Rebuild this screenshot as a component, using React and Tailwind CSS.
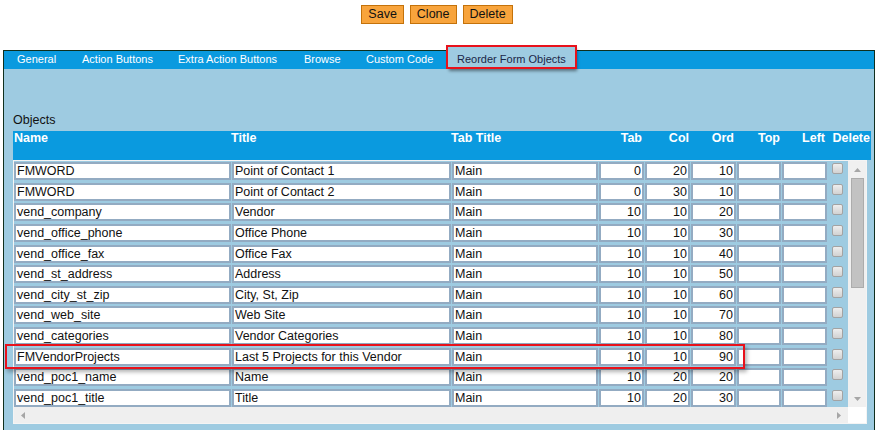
import React from "react";

const rows = [
  ["FMWORD", "Point of Contact 1", "Main", "0", "20", "10"],
  ["FMWORD", "Point of Contact 2", "Main", "0", "30", "10"],
  ["vend_company", "Vendor", "Main", "10", "10", "20"],
  ["vend_office_phone", "Office Phone", "Main", "10", "10", "30"],
  ["vend_office_fax", "Office Fax", "Main", "10", "10", "40"],
  ["vend_st_address", "Address", "Main", "10", "10", "50"],
  ["vend_city_st_zip", "City, St, Zip", "Main", "10", "10", "60"],
  ["vend_web_site", "Web Site", "Main", "10", "10", "70"],
  ["vend_categories", "Vendor Categories", "Main", "10", "10", "80"],
  ["FMVendorProjects", "Last 5 Projects for this Vendor", "Main", "10", "10", "90"],
  ["vend_poc1_name", "Name", "Main", "10", "20", "20"],
  ["vend_poc1_title", "Title", "Main", "10", "20", "30"],
];

const tabs = [
  { label: "General", w: "w-[65px]" },
  { label: "Action Buttons", w: "w-[96px]" },
  { label: "Extra Action Buttons", w: "w-[126px]" },
  { label: "Browse", w: "w-[62px]" },
  { label: "Custom Code", w: "w-[94px]" },
];

const Btn = ({ children }) => (
  <button className="h-[19px] px-[6px] bg-[#f8a43c] border border-[#c4720a] text-[12.5px] leading-none text-[#111]">
    {children}
  </button>
);

const Cell = ({ w, right, children }) => (
  <div
    className={`${w} h-[18px] shrink-0 bg-white border-2 border-[#93abc2] px-[1px] leading-[14px] text-[12.5px] text-[#111] overflow-hidden whitespace-nowrap ${
      right ? "text-right" : ""
    }`}
  >
    {children}
  </div>
);

const Arrow = ({ dir }) => {
  const pts = {
    up: "0,4 3.5,0 7,4",
    down: "0,0 3.5,4 7,0",
    left: "4,0 0,3.5 4,7",
    right: "0,0 4,3.5 0,7",
  }[dir];
  const vert = dir === "up" || dir === "down";
  return (
    <svg width={vert ? 7 : 4} height={vert ? 4 : 7} className="block">
      <polygon points={pts} fill="#a6a6a6" />
    </svg>
  );
};

export default function App() {
  return (
    <div className="relative w-[880px] h-[430px] overflow-hidden bg-white font-['Liberation_Sans',Arial,sans-serif]">
      {/* buttons */}
      <div className="h-[50px] flex justify-center gap-[6px] pt-[5px] pr-[6px]">
        <Btn>Save</Btn>
        <Btn>Clone</Btn>
        <Btn>Delete</Btn>
      </div>

      <div className="ml-[3px] w-[872px] h-[380px] border-l border-t border-r border-[#0f2f1d] bg-[#9ecbe1]">
        {/* tab bar */}
        <div className="h-[18px] bg-[#0a9adf] flex items-end text-[11px] text-white">
          {tabs.map((t) => (
            <div key={t.label} className={`${t.w} h-[18px] pl-[13px] leading-[16px]`}>
              {t.label}
            </div>
          ))}
          <div className="w-[128px] h-[22px] pl-[10px] pt-[4px] bg-[#9ecbe1] text-[#1b2748] leading-[16px] shadow-[2px_2px_3px_rgba(0,0,0,0.45)]">
            Reorder Form Objects
          </div>
        </div>

        <div className="pl-[9px] pr-[3px] pt-[44px]">
          <div className="h-[14px] text-[12.5px] leading-[14px] text-[#111]">Objects</div>

          {/* header */}
          <div className="mt-[4px] h-[29px] w-[858px] bg-[#0a9adf] flex text-white font-bold text-[12.5px] leading-[15px]">
            <div className="w-[218px] pl-[1px]">Name</div>
            <div className="w-[220px]">Title</div>
            <div className="w-[147px]">Tab Title</div>
            <div className="w-[46px] text-right pr-[2px]">Tab</div>
            <div className="w-[46px] text-right pr-[1px]">Col</div>
            <div className="w-[46px] text-right pr-[2px]">Ord</div>
            <div className="w-[46px] text-right pr-[2px]">Top</div>
            <div className="w-[46px] text-right pr-[3px]">Left</div>
            <div className="flex-1 text-right pr-[1px]">Delete</div>
          </div>

          {/* scroll box */}
          <div className="w-[854px] h-[264px] border border-[#f4f4f4] flex flex-col">
            <div className="flex h-[246px]">
              <div className="w-[834px] h-[246px] overflow-hidden pt-[1px]">
                {rows.map((r, i) => (
                  <div key={i} className="h-[20.64px] flex gap-[1px] items-start">
                    <Cell w="w-[217px]">{r[0]}</Cell>
                    <Cell w="w-[219px]">{r[1]}</Cell>
                    <Cell w="w-[146px]">{r[2]}</Cell>
                    <Cell w="w-[45px]" right>{r[3]}</Cell>
                    <Cell w="w-[45px]" right>{r[4]}</Cell>
                    <Cell w="w-[45px]" right>{r[5]}</Cell>
                    <Cell w="w-[44px]" />
                    <Cell w="w-[45px]" />
                    <div className="ml-[4px] mt-[1px] w-[11px] h-[11px] shrink-0 rounded-[2px] border border-[#a3a3a3] bg-gradient-to-b from-[#eeeeee] to-[#d2d2d2]" />
                  </div>
                ))}
              </div>
              <div className="w-[18px] h-[246px] bg-[#f0f0f0] flex flex-col items-center">
                <div className="h-[17px] flex items-center justify-center">
                  <Arrow dir="up" />
                </div>
                <div className="w-[13px] h-[110px] bg-[#c2c2c2] border border-[#acacac]" />
                <div className="flex-1" />
                <div className="h-[17px] flex items-center justify-center">
                  <Arrow dir="down" />
                </div>
              </div>
            </div>
            <div className="flex h-[16px]">
              <div className="w-[834px] bg-[#efefef] flex items-center justify-between px-[7px]">
                <Arrow dir="left" />
                <Arrow dir="right" />
              </div>
              <div className="w-[18px] bg-white" />
            </div>
          </div>
        </div>
      </div>

      {/* annotation highlights */}
      <div className="absolute left-[446px] top-[45px] w-[131px] h-[24px] border-2 border-[#e8121b]" />
      <div className="absolute left-[5px] top-[344px] w-[740px] h-[25px] border-2 border-[#e8121b] shadow-[2px_3px_4px_rgba(0,0,0,0.3)]" />
    </div>
  );
}
